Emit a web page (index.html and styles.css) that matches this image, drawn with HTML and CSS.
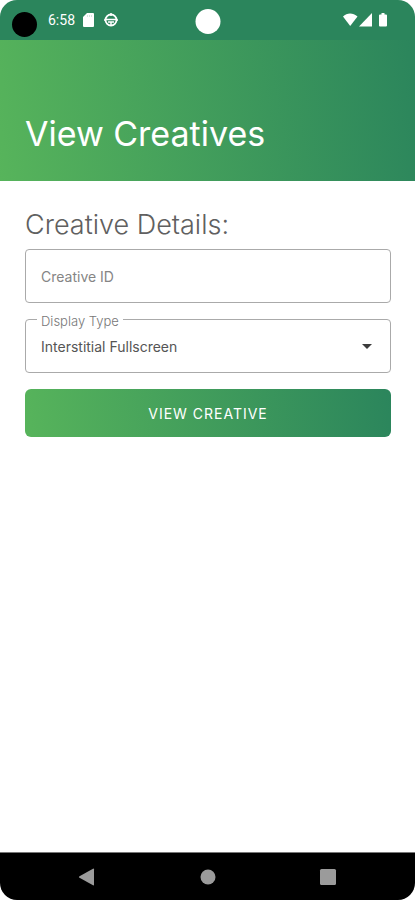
FILE: index.html
```html
<!DOCTYPE html>
<html lang="en">
<head>
<meta charset="utf-8">
<meta name="viewport" content="width=device-width, initial-scale=1">
<title>View Creatives</title>
<link rel="stylesheet" href="styles.css">
</head>
<body>
<div class="screen">
  <div class="status">
    <div class="status-left">
      <span class="recorder"></span>
      <span class="clock">6:58</span>
      <svg class="sd-icon" width="11" height="14" viewBox="0 0 11 14" aria-hidden="true"><path fill="#fff" d="M4 0h6a1 1 0 0 1 1 1v12a1 1 0 0 1-1 1H1a1 1 0 0 1-1-1V4z"/><path stroke="#2b855c" stroke-opacity=".2" d="M4.500 2v2M6.500 2v2M8.500 2v2"/></svg>
      <svg class="debug-icon" width="14" height="14" viewBox="0 0 14 14" fill="none" stroke="#fff" aria-hidden="true"><circle cx="7" cy="7" r="5.500" stroke-width="1.800"/><path stroke-width="1.500" d="M1 6.500h12M4 9h6M7 9v4"/><path stroke-width="1.500" d="M7 0v3M0 7h2M12 7h2"/></svg>
    </div>
    <span class="camera"></span>
    <div class="status-right">
      <svg width="46" height="14" viewBox="0 0 46 14" fill="#fff" aria-hidden="true"><path d="M1 3.500C5-.5 11-.5 15.500 3.500L8.200 13z"/><path d="M30 0v13.500H17z"/><path d="M38 1.500h1.500V0h3v1.500H44a1 1 0 0 1 1 1v10a1 1 0 0 1-1 1h-6a1 1 0 0 1-1-1v-10a1 1 0 0 1 1-1z"/></svg>
    </div>
  </div>
  <header class="header"><h1>View Creatives</h1></header>
  <main class="content">
    <h2>Creative Details:</h2>
    <form class="form">
      <input class="field" type="text" placeholder="Creative ID" aria-label="Creative ID">
      <div class="dropdown">
        <label for="display-type">Display Type</label>
        <select class="field" id="display-type"><option>Interstitial Fullscreen</option></select>
        <svg class="caret" width="10" height="5" viewBox="0 0 10 5" aria-hidden="true"><path fill="#3c3c3c" d="M0 0h10L5 5z"/></svg>
      </div>
      <button class="submit" type="button">VIEW CREATIVE</button>
    </form>
  </main>
  <nav class="navbar" aria-label="System">
    <button type="button" aria-label="Back"><svg width="18" height="18" viewBox="0 0 18 18"><path fill="#9b9b9b" d="M1.500 8.200 15 .7q1-.4 1 .6v15.400q0 1-1 .6L1.500 9.800q-1.400-.8 0-1.600z"/></svg></button>
    <button type="button" aria-label="Home"><svg width="18" height="18" viewBox="0 0 18 18"><circle cx="9" cy="9" r="7.500" fill="#9b9b9b"/></svg></button>
    <button type="button" aria-label="Recents"><svg width="18" height="18" viewBox="0 0 18 18"><rect x="1" y="1" width="16" height="16" rx="1.500" fill="#9b9b9b"/></svg></button>
  </nav>
</div>
</body>
</html>
```

FILE: styles.css
```css
* {
  box-sizing: border-box;
}

body {
  margin: 0;
  background: #fff;
  font-family: Inter, Roboto, sans-serif;
  font-weight: 400;
}

h1,
h2 {
  margin: 0;
}

button,
input,
select {
  font: inherit;
}

.screen {
  display: flex;
  flex-direction: column;
  min-height: 100vh;
  overflow: hidden;
  border-radius: 17px;
}

.status {
  display: grid;
  grid-template-columns: 1fr auto 1fr;
  align-items: center;
  height: 40px;
  padding: 0 27px 0 12px;
  background: #2b855c;
}

.status-left {
  display: flex;
  align-items: center;
}

.recorder {
  width: 25px;
  height: 25px;
  margin-top: 8px;
  border-radius: 50%;
  background: #000;
}

.clock {
  margin-left: 11px;
  color: #fff;
  font-family: Roboto, sans-serif;
  font-size: 14px;
}

.sd-icon {
  margin-left: 8px;
}

.debug-icon {
  margin-left: 10px;
}

.camera {
  position: absolute;
  left: 50%;
  top: 9px;
  width: 25px;
  height: 25px;
  border-radius: 50%;
  background: #fff;
  transform: translateX(-50%);
}

.status-right {
  display: flex;
  grid-column: 3;
  justify-content: flex-end;
}

.header {
  display: flex;
  align-items: flex-end;
  height: 141px;
  padding: 0 25px 26px;
  background: linear-gradient(80deg, #57b45b, #2b855c);
  color: #fff;
}

h1 {
  font-size: 34px;
  font-weight: 400;
  line-height: 42px;
}

.content {
  flex: 1;
  padding: 28px 24px 0 25px;
}

h2 {
  color: #606060;
  font-size: 27px;
  font-weight: 300;
  line-height: 32px;
}

.form {
  display: flex;
  flex-direction: column;
  gap: 16px;
  margin-top: 8px;
}

.field {
  display: block;
  width: 100%;
  height: 54px;
  padding: 0 15px;
  border: 1px solid #aaa;
  border-radius: 4px;
  background: #fff;
  color: #555;
  font-size: 14px;
  appearance: none;
}

.field::placeholder {
  color: #858585;
  opacity: 1;
}

.dropdown {
  position: relative;
}

.dropdown label {
  position: absolute;
  left: 12px;
  top: -6px;
  padding: 0 4px;
  background: #fff;
  color: #777;
  font-size: 13px;
  font-weight: 300;
  line-height: 16px;
}

.caret {
  position: absolute;
  right: 19px;
  top: 25px;
  pointer-events: none;
}

.submit {
  height: 48px;
  border: 0;
  border-radius: 6px;
  background: linear-gradient(80deg, #57b45b, #2b855c);
  color: #fff;
  font-size: 14px;
  letter-spacing: 1px;
}

.navbar {
  display: flex;
  justify-content: space-between;
  align-items: center;
  height: 48px;
  padding: 0 78px;
  border-top: 1px solid #777;
  background: #000;
}

.navbar button {
  display: flex;
  padding: 0;
  border: 0;
  background: none;
}
```
